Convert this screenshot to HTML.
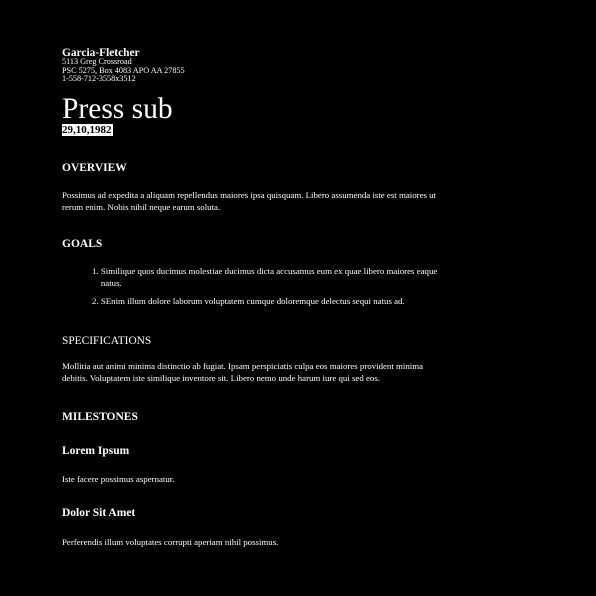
<!DOCTYPE html>
<html><head><meta charset="utf-8"><style>
html,body{margin:0;padding:0;background:#000;width:596px;height:596px;overflow:hidden}
body{font-family:"Liberation Serif",serif;color:#fff;position:relative}
.a{position:absolute;left:62px;white-space:nowrap}
.h{font-size:11.5px;font-weight:bold;line-height:14px}
.p{font-size:8.85px;line-height:12px}
</style></head><body>
<div class="a h" style="top:46px;font-size:11.4px">Garcia-Fletcher</div>
<div class="a" style="top:58px;font-size:8.2px;line-height:8.6px">5113 Greg Crossroad<br>PSC 5275, Box 4083 APO AA 27855<br>1-558-712-3558x3512</div>
<div class="a" style="top:91px;font-size:29.5px;line-height:36px">Press sub</div>
<div class="a" style="top:124px;font-size:11px;font-weight:bold;line-height:12px;background:#fff;color:#000;padding:0 1px 0 0">29,10,1982</div>
<div class="a h" style="top:161px">OVERVIEW</div>
<div class="a p" style="top:189px">Possimus ad expedita a aliquam repellendus maiores ipsa quisquam. Libero assumenda iste est maiores ut<br>rerum enim. Nobis nihil neque earum soluta.</div>
<div class="a h" style="top:237px">GOALS</div>
<div class="a p" style="top:265px;left:92px">1. Similique quos ducimus molestiae ducimus dicta accusamus eum ex quae libero maiores eaque<br>&nbsp;&nbsp;&nbsp;&nbsp;natus.</div>
<div class="a p" style="top:295px;left:92px">2. SEnim illum dolore laborum voluptatem cumque doloremque delectus sequi natus ad.</div>
<div class="a h" style="top:334px;font-weight:normal;font-size:11.4px">SPECIFICATIONS</div>
<div class="a p" style="top:360px">Mollitia aut animi minima distinctio ab fugiat. Ipsam perspiciatis culpa eos maiores provident minima<br>debitis. Voluptatem iste similique inventore sit. Libero nemo unde harum iure qui sed eos.</div>
<div class="a h" style="top:410px">MILESTONES</div>
<div class="a h" style="top:444px;font-size:11.5px">Lorem Ipsum</div>
<div class="a p" style="top:473px">Iste facere possimus aspernatur.</div>
<div class="a h" style="top:506px;font-size:11.5px">Dolor Sit Amet</div>
<div class="a p" style="top:536px">Perferendis illum voluptates corrupti aperiam nihil possimus.</div>
</body></html>
